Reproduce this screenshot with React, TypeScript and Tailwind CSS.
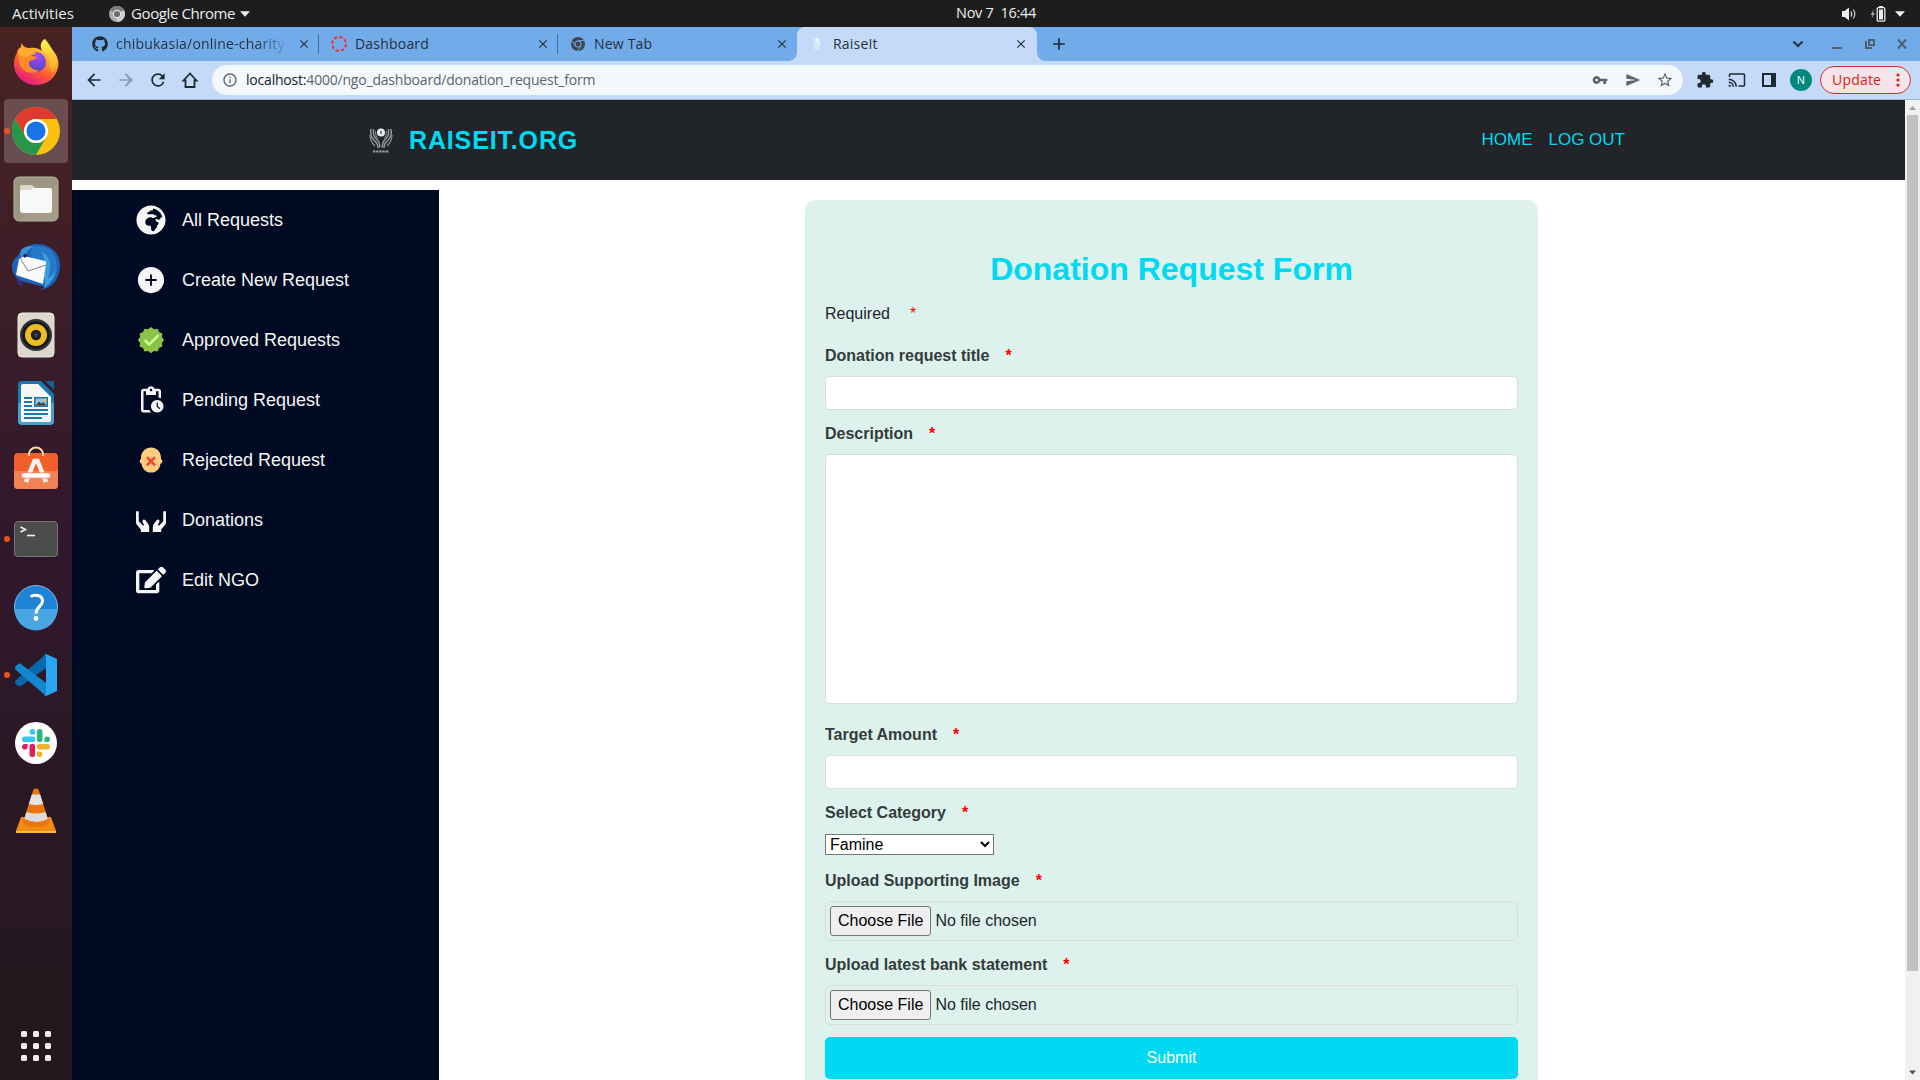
import type { ReactNode } from "react";
import { FaEdit, FaGithub, FaGlobeAfrica } from "react-icons/fa";
import { AiFillPlusCircle } from "react-icons/ai";
import { FcApproval, FcDisapprove } from "react-icons/fc";
import {
  MdPendingActions,
  MdArrowBack,
  MdArrowForward,
  MdRefresh,
  MdInfoOutline,
  MdVpnKey,
  MdSend,
  MdStarBorder,
  MdExtension,
  MdCast,
  MdClose,
  MdAdd,
} from "react-icons/md";

/* ---------- Desktop top bar ---------- */

function TopBar() {
  return (
    <div className="grid h-[27px] grid-cols-[1fr_auto_1fr] items-center bg-[#1d1d1d] font-['Open_Sans',sans-serif] text-[#ececec]">
      <div className="flex items-center">
        <span className="ml-3 w-[97px] text-[15px] leading-none">Activities</span>
        <svg viewBox="0 0 16 16" className="h-4 w-4">
          <circle cx="8" cy="8" r="8" fill="#a9a9a9" />
          <path d="M8 8 L1.1 4 A8 8 0 0 1 15 4 Z" fill="#7c7c7c" />
          <path d="M8 8 L15 4.2 A8 8 0 0 1 8 16 Z" fill="#cfcfcf" />
          <circle cx="8" cy="8" r="4.2" fill="#e8e8e8" />
          <circle cx="8" cy="8" r="3.1" fill="#6e6e6e" />
        </svg>
        <span className="ml-1.5 w-[105px] text-[15px] leading-none tracking-[-0.4px] whitespace-nowrap">Google Chrome</span>
        <svg viewBox="0 0 10 6" className="ml-1 h-1.5 w-2.5">
          <path d="M0 0.3H10L5 5.7Z" fill="#ececec" />
        </svg>
      </div>
      <span className="translate-x-[36px] text-[14.5px] leading-none tracking-[-0.3px] whitespace-pre">Nov 7  16:44</span>
      <div className="flex items-center justify-end pr-[15px]">
        <svg viewBox="0 0 16 16" className="mr-px h-4 w-4" fill="none" stroke="#ececec">
          <path d="M1 5h2.500L8 1.500v13L3.500 11H1Z" fill="#ececec" stroke="none" />
          <path d="M10 5.500q1.600 2.500 0 5" strokeWidth="1.300" />
          <path d="M12.300 3.500q3 4.500 0 9" strokeWidth="1.300" opacity="0.800" />
        </svg>
        <svg viewBox="0 0 16 16" className="ml-3 h-4 w-4">
          <path d="M4 3 0.500 9h2l-1 4 3.500-6H3Z" fill="#a5a5a5" />
          <rect x="9" y="0" width="4" height="2" fill="#ececec" />
          <rect x="7.200" y="1.700" width="7.600" height="13.400" rx="1.200" fill="none" stroke="#ececec" strokeWidth="1.300" />
          <rect x="9" y="3.500" width="4" height="10" fill="#ececec" />
        </svg>
        <svg viewBox="0 0 10 6" className="ml-[9px] h-1.5 w-2.5">
          <path d="M0 0.3H10L5 5.7Z" fill="#ececec" />
        </svg>
      </div>
    </div>
  );
}

/* ---------- Dock icons, each drawn on a 64 × 64 tile ---------- */

function Firefox() {
  return (
    <>
      <defs>
        <linearGradient id="ffBody" x1="0.8" y1="0.05" x2="0.3" y2="1">
          <stop offset="0" stopColor="#ffe94a" />
          <stop offset="0.35" stopColor="#ffa92a" />
          <stop offset="0.65" stopColor="#ff5634" />
          <stop offset="1" stopColor="#e31587" />
        </linearGradient>
        <radialGradient id="ffGlobe" cx="0.6" cy="0.25" r="0.8">
          <stop offset="0" stopColor="#a04bff" />
          <stop offset="1" stopColor="#4a48b8" />
        </radialGradient>
        <linearGradient id="ffTail" x1="0.5" y1="0" x2="0.5" y2="1">
          <stop offset="0" stopColor="#fff44f" />
          <stop offset="1" stopColor="#ff9a2b" />
        </linearGradient>
      </defs>
      <path d="M17 16c0-3 1-4 1-4 0 3 4 5 8 5 4-1 10 1 12 3l3-12c4 4 6 9 9 13 5 6 6 14 2 21-4 8-11 12-20 12C19 54 10 44 10 33c0-5 1-8 3-11 0-3 2-5 4-6Z" fill="url(#ffBody)" />
      <circle cx="32" cy="31" r="10" fill="url(#ffGlobe)" />
      <path d="M38 20c-3-6 0-11 3-12 1 6 7 9 10 15 3 7 1 15-4 20 1-4 0-7-2-8 2-6-1-13-7-15Z" fill="url(#ffTail)" />
      <path d="M14 24c4-4 9-3 12 0 3 2 6 1 7 2-1 3-6 3-8 5-1 4 4 9 10 8-7 6-19 2-20-9Z" fill="#ff8a26" />
      <path d="M17 16c2 1 3 2 4 3 6-2 10 1 11 4-4 0-7 3-11 3-3 0-6-1-7-4 0-3 2-5 3-6Z" fill="#ffab2e" />
    </>
  );
}

function Chrome() {
  return (
    <>
      <circle cx="32" cy="32" r="24" fill="#fcc010" />
      <path d="M11.2 20A24 24 0 0 1 52.8 20H32A12 12 0 0 0 21.6 38Z" fill="#de3b2e" />
      <path d="M11.2 20 21.6 38A12 12 0 0 0 42.4 38L32 56A24 24 0 0 1 11.2 20Z" fill="#27964a" />
      <circle cx="32" cy="32" r="12" fill="#fff" />
      <circle cx="32" cy="32" r="9.6" fill="#1a73e8" />
    </>
  );
}

function Files() {
  return (
    <>
      <rect x="10" y="10" width="44" height="44" rx="5" fill="#9c9581" stroke="#bab49f" />
      <path d="M54 16v33a5 5 0 0 1-5 5H15Z" fill="#aaa48f" opacity="0.6" />
      <path d="M16 20a2 2 0 0 1 2-2h10l4 4h8v8H16Z" fill="#dedacb" />
      <path d="M16 25q0-2 2-2h8l4-2h16q2 0 2 2v20q0 3-3 3H19q-3 0-3-3Z" fill="#f8f8f7" />
    </>
  );
}

function Thunderbird() {
  return (
    <>
      <path d="M22 13c3-3 7-4 10-4 15 0 25 10 24 23-1 13-8 21-20 23l5-3-24-6C11 42 8 38 8 32c0-6 3-9 6-11 1-3 4-6 8-8Z" fill="#1c61bb" />
      <path d="M34 11c14 0 19 10 19 20 0 10-5 17-13 22 2-5 3-9 2-14-2-8-8-12-15-17-1-7 2-10 7-11Z" fill="#2579c8" />
      <path d="M38 17c8 4 10 13 6 26 5-2 7-6 8-10-1 9-5 15-12 20 1-5 1-8 0-12 1-9 1-17-2-24Z" fill="#3b9fdc" />
      <path d="M11 43c5 1 8 5 8 9-3-1-6-5-8-9Z" fill="#3b2a8a" />
      <path d="M15 24 20 21 41 26q2 1 1 3l-3 20L12 40Z" fill="#fafafa" />
      <path d="M16 23 24 36 42 30" fill="none" stroke="#85858c" strokeWidth="1" />
      <circle cx="21" cy="21" r="1.6" fill="#17264f" />
      <path d="M17 15c4-4 9-5 14-3-6 1-8 4-10 9l-4 1c-1-3-1-5 0-7Z" fill="#3b8fd8" />
      <circle cx="21" cy="20.500" r="1.700" fill="#17264f" />
    </>
  );
}

function Rhythmbox() {
  return (
    <>
      <rect x="14" y="10" width="36" height="44" rx="4" fill="#dcd8cd" stroke="#edeae2" />
      <circle cx="32" cy="32" r="16" fill="#33363d" />
      <circle cx="32" cy="32" r="13.8" fill="#17191d" />
      <circle cx="32" cy="32" r="11" fill="#eebd23" />
      <circle cx="32" cy="32" r="5.2" fill="#1f2023" />
      <circle cx="32" cy="32" r="2" fill="#3d4045" />
    </>
  );
}

function Writer() {
  return (
    <>
      <path d="M18 10h19l13 13v27a4 4 0 0 1-4 4H18a4 4 0 0 1-4-4V14a4 4 0 0 1 4-4Z" fill="#1878b0" />
      <path d="M14 32h36v18a4 4 0 0 1-4 4H18a4 4 0 0 1-4-4Z" fill="#47a0d0" />
      <path d="M17 15q0-2 2-2h15l13 13v23q0 2-2 2H19q-2 0-2-2Z" fill="#f7f7f7" />
      <path d="M41 10h9v9Z" fill="#0e6596" />
      <path d="M20 27h8M20 31h8M20 35h8M20 39h24M20 43h24M20 47h18" stroke="#1a78ae" strokeWidth="2" />
      <rect x="30" y="26" width="14" height="10" fill="#1a78ae" />
      <rect x="31.5" y="27.5" width="11" height="7" fill="#8cc6ea" />
      <path d="m31.500 34.500 3.500-4 2.500 2 2-1.500 3 3.500Z" fill="#444" />
      <circle cx="41" cy="29" r="1.5" fill="#f2c230" />
    </>
  );
}

function Software() {
  return (
    <>
      <rect x="10" y="14" width="44" height="36" rx="4" fill="#f1602a" />
      <path d="M10 32h44v14a4 4 0 0 1-4 4H14a4 4 0 0 1-4-4Z" fill="#f38254" />
      <path d="M25 17v-2a7 6.500 0 0 1 14 0v2" fill="none" stroke="#f8dcb4" strokeWidth="2" />
      <path d="M22 43 30.500 22h3L42 43" fill="none" stroke="#fdf3ee" strokeWidth="4.500" />
      <path d="M20 36.500h24" stroke="#f38254" strokeWidth="6" />
      <path d="M20 36.500h24" stroke="#fff" strokeWidth="4.500" strokeLinecap="round" />
    </>
  );
}

function TerminalIcon() {
  return (
    <>
      <rect x="10.500" y="14.500" width="43" height="35" rx="3.500" fill="#4c4c4c" stroke="#767676" />
      <path d="m16.500 20 5 2.500-5 2.500" fill="none" stroke="#f2f2f2" strokeWidth="1.600" />
      <path d="M23 28.500h8" stroke="#f2f2f2" strokeWidth="1.600" />
    </>
  );
}

function Help() {
  return (
    <>
      <circle cx="32" cy="32" r="21.500" fill="#1f83d6" stroke="#79b8ec" />
      <path d="M10.500 34h43a21.500 21.500 0 0 1-43 0Z" fill="#48a6e5" />
      <path d="M26.500 21.500c4-2.500 12-1.500 12 4.500 0 5-6.500 6-6.500 12.500" fill="none" stroke="#fff" strokeWidth="3" />
      <circle cx="32" cy="43.500" r="2.400" fill="#fff" />
    </>
  );
}

function VsCode() {
  return (
    <>
      <path d="M42 11v14L17 43c-2 1-3 0-4-1-3-2-2-4-1-5Z" fill="#0768ab" />
      <path d="M42 53V40L17 21c-2-1-3 0-4 1-3 2-2 4-1 5Z" fill="#1287d1" />
      <path d="M42 11 53 16v32l-11 5q-1 0-2-1c2 1 2 0 2-2V14q0-3-2-2Z" fill="#29a7f3" />
    </>
  );
}

function Slack() {
  return (
    <>
      <circle cx="32" cy="32" r="21" fill="#fff" />
      <g strokeWidth="5.600" strokeLinecap="round">
        <path d="M20.800 28.300h7.700" stroke="#36c5f0" />
        <path d="M35.700 20.800v7.700" stroke="#2eb67d" />
        <path d="M35.500 35.700h7.700" stroke="#ecb22e" />
        <path d="M28.300 35.500v7.700" stroke="#e01e5a" />
      </g>
      <path d="M28.300 18a2.800 2.800 0 1 0 0 5.600h2.800v-2.800a2.800 2.800 0 0 0-2.800-2.800Z" fill="#36c5f0" />
      <path d="M46 28.300a2.800 2.800 0 1 0-5.600 0v2.800h2.800a2.800 2.800 0 0 0 2.800-2.800Z" fill="#2eb67d" />
      <path d="M35.700 46a2.800 2.800 0 1 0 0-5.600h-2.800v2.800a2.800 2.800 0 0 0 2.800 2.800Z" fill="#ecb22e" />
      <path d="M18 35.700a2.800 2.800 0 1 0 5.600 0v-2.800h-2.800a2.800 2.800 0 0 0-2.800 2.800Z" fill="#e01e5a" />
    </>
  );
}

function Vlc() {
  return (
    <>
      <path d="M17 38h30l5 14v2H12v-2Z" fill="#f38b10" />
      <path d="M12 52h40v1.800H12Z" fill="#ffc14a" />
      <path d="M29.500 10.500q2.500-2 5 0L45 43q-1 5-13 5t-13-5Z" fill="#e9750c" />
      <path d="M27.800 15.500h8.400l3 9.500q-7 2-14.400 0Z" fill="#e4e4e4" />
      <path d="M22.500 33q9.500 3 19 0l2.200 7q-10 6-23.400 0Z" fill="#dcdcdc" />
    </>
  );
}

const dockItems: { name: string; art: ReactNode; running?: boolean; active?: boolean }[] = [
  { name: "firefox", art: <Firefox /> },
  { name: "chrome", art: <Chrome />, running: true, active: true },
  { name: "files", art: <Files /> },
  { name: "mail", art: <Thunderbird /> },
  { name: "music", art: <Rhythmbox /> },
  { name: "writer", art: <Writer /> },
  { name: "software", art: <Software /> },
  { name: "terminal", art: <TerminalIcon />, running: true },
  { name: "help", art: <Help /> },
  { name: "code", art: <VsCode />, running: true },
  { name: "slack", art: <Slack /> },
  { name: "vlc", art: <Vlc /> },
];

function Dock() {
  return (
    <div className="flex w-[72px] shrink-0 flex-col items-center bg-linear-to-b from-[#492322] via-[#30182c] to-[#23181c] pt-1">
      <div className="flex flex-col gap-1">
        {dockItems.map((d) => (
          <div key={d.name} className={d.active ? "relative h-16 w-16 rounded bg-white/20" : "relative h-16 w-16"}>
            <svg viewBox="0 0 64 64" className="h-16 w-16">
              {d.art}
            </svg>
            {d.running && <span className="absolute top-[29px] left-0 h-1.5 w-1.5 rounded-full bg-[#e95420]" />}
          </div>
        ))}
      </div>
      <div className="mt-auto mb-[19px] grid grid-cols-3 gap-1.5">
        {Array.from({ length: 9 }, (_, i) => (
          <span key={i} className="h-1.5 w-1.5 rounded-[1.5px] bg-[#f0eeee]" />
        ))}
      </div>
    </div>
  );
}

/* ---------- Browser chrome ---------- */

function RaiseItLogo({ className }: { className: string }) {
  return (
    <svg viewBox="0 0 24 26" className={className}>
      <g fill="none" stroke="#8f9a9c" strokeWidth="1.500">
        <path d="M2 2c-1 6 0 9 4 12 2 2 3 4 3 7" />
        <path d="M4.500 2C4 8 5 10 8 12.500c2 2 2.700 4 2.700 8" />
        <path d="M22 2c1 6 0 9-4 12-2 2-3 4-3 7" />
        <path d="M19.500 2C20 8 19 10 16 12.500c-2 2-2.700 4-2.700 8" />
        <path d="M1 8c0 4 1 7 5 11M23 8c0 4-1 7-5 11" strokeWidth="1.200" />
        <path d="M6.500 4c0 4 1 6 2.500 7.500M17.500 4c0 4-1 6-2.500 7.500" strokeWidth="1" />
      </g>
      <circle cx="12" cy="5.500" r="4" fill="#e6ecec" />
      <ellipse cx="12" cy="5.500" rx="1" ry="1.700" fill="#6a7375" />
      <path d="M4 24.500h16" stroke="#98a2a4" strokeWidth="2.200" strokeDasharray="2.400 0.700" />
    </svg>
  );
}

const tabs: { title: string; icon: ReactNode; active?: boolean; divider?: boolean; fade?: boolean }[] = [
  { title: "chibukasia/online-charity-", icon: <FaGithub className="h-4 w-4 text-[#24292f]" />, divider: true, fade: true },
  {
    title: "Dashboard",
    icon: (
      <svg viewBox="0 0 16 16" className="h-4 w-4">
        <circle cx="8" cy="8" r="6.900" fill="none" stroke="#f0342a" strokeWidth="2" strokeDasharray="3.400 2.020" />
      </svg>
    ),
    divider: true,
  },
  {
    title: "New Tab",
    icon: (
      <svg viewBox="0 0 16 16" className="h-4 w-4">
        <circle cx="8" cy="8" r="7" fill="#3d4650" />
        <g stroke="#71aaea" strokeWidth="0.900">
          <path d="M8 4.500h6.500M5 9.800 1.800 4.400M11 9.800 7.700 15" />
        </g>
        <circle cx="8" cy="8" r="3.500" fill="#71aaea" />
        <circle cx="8" cy="8" r="2.500" fill="#3d4650" />
      </svg>
    ),
  },
  {
    title: "RaiseIt",
    icon: (
      <svg viewBox="0 0 16 16" className="h-4 w-4">
        <path d="M4.500 2v6q0 3 3.500 4 3.500-1 3.500-4V2L9.500 5h-3Z" fill="#d9ebf8" />
        <circle cx="8" cy="3.500" r="1.600" fill="#f6fbff" />
        <path d="M5 13h6" stroke="#dfeffa" />
      </svg>
    ),
    active: true,
  },
];

function TabStrip() {
  return (
    <div className="flex h-[34px] items-center bg-[#71abea] pl-2 text-[#26303a]">
      {tabs.map((t) => (
        <div
          key={t.title}
          className={
            t.active
              ? "relative flex h-full w-[240px] items-center rounded-t-lg bg-[#c5daf8] pl-3"
              : "relative flex h-full w-[239px] items-center pl-3"
          }
        >
          {t.icon}
          <span
            className={
              t.fade
                ? "ml-2 w-[174px] overflow-hidden bg-linear-to-r from-[#26303a] from-80% to-[#71abea] bg-clip-text text-sm tracking-[0.2px] whitespace-nowrap text-transparent"
                : "ml-2 w-[174px] text-sm tracking-[0.2px] whitespace-nowrap"
            }
          >
            {t.title}
          </span>
          <MdClose className="ml-[7px] h-3.5 w-3.5" />
          {t.divider && <span className="absolute top-[7px] right-0 h-5 w-px bg-[#46699a]" />}
          {t.active && (
            <>
              <span className="absolute bottom-0 -left-2 h-2 w-2 bg-[radial-gradient(circle_at_0_0,#71abea_7.5px,#c5daf8_8px)]" />
              <span className="absolute -right-2 bottom-0 h-2 w-2 bg-[radial-gradient(circle_at_100%_0,#71abea_7.5px,#c5daf8_8px)]" />
            </>
          )}
        </div>
      ))}
      <MdAdd className="ml-3 h-5 w-5 text-[#202a33]" />
      <div className="ml-auto flex items-center pr-2.5 text-[#51606f]">
        <svg viewBox="0 0 12 12" className="mr-[27px] h-3 w-3">
          <path d="m1.500 3.500 4.500 4.500 4.500-4.500" fill="none" stroke="#26323d" strokeWidth="2" />
        </svg>
        <svg viewBox="0 0 12 12" className="mr-[21px] h-3 w-3">
          <path d="M1 10h10" stroke="currentColor" strokeWidth="2" />
        </svg>
        <svg viewBox="0 0 12 12" className="mr-5 h-3 w-3" fill="none" stroke="currentColor">
          <path d="M5 2h5v5H5Z" strokeWidth="2" />
          <path d="M2 3v7h6" strokeWidth="2" />
        </svg>
        <svg viewBox="0 0 12 12" className="mr-0.5 h-3 w-3">
          <path d="m2 1.500 8 9m0-9-8 9" stroke="currentColor" strokeWidth="2" />
        </svg>
      </div>
    </div>
  );
}

function Toolbar() {
  return (
    <div className="flex h-[39px] items-center border-b border-[#9db4cc] bg-[#c5daf8] pl-3 text-[#202a33]">
      <div className="flex items-center gap-3">
        <MdArrowBack className="h-5 w-5" />
        <MdArrowForward className="h-5 w-5 text-[#8595aa]" />
        <MdRefresh className="h-5 w-5" />
        <svg viewBox="0 0 20 20" className="h-5 w-5">
          <path d="M3.500 10.500 10 3.500l6.500 7h-2V17h-9v-6.500Z" fill="none" stroke="currentColor" strokeWidth="1.800" />
        </svg>
      </div>
      <div className="ml-3 flex h-[30px] w-[1471px] items-center rounded-full bg-[#f3f8fd] pl-2.5 text-[#5f6368]">
        <MdInfoOutline className="h-4 w-4" />
        <span className="ml-2 text-sm tracking-[-0.2px]">
          <span className="text-[#202124]">localhost:</span>4000/ngo_dashboard/donation_request_form
        </span>
        <div className="ml-auto flex items-center gap-4 pr-[9px]">
          <MdVpnKey className="h-4 w-4" />
          <MdSend className="h-4 w-4 translate-x-px" />
          <MdStarBorder className="h-[18px] w-[18px]" />
        </div>
      </div>
      <MdExtension className="ml-[13px] h-[18px] w-[18px]" />
      <MdCast className="ml-3.5 h-[18px] w-[18px]" />
      <svg viewBox="0 0 14 14" className="ml-4 h-3.5 w-3.5">
        <path d="M1 1h12v12H1Z" fill="none" stroke="currentColor" strokeWidth="2" />
        <path d="M9 1h4v12H9Z" fill="currentColor" />
      </svg>
      <span className="ml-3.5 flex h-[22px] w-[22px] items-center justify-center rounded-full bg-[#00897b] text-[11px] text-white">N</span>
      <div className="ml-2 flex h-7 w-[91px] items-center rounded-full border border-[#d93025] bg-[#f3e5ea] pl-[11px] text-[#d91e18]">
        <span className="w-[64px] text-sm tracking-[0.2px]">Update</span>
        <svg viewBox="0 0 4 14" className="h-3.5 w-1" fill="currentColor">
          <circle cx="2" cy="2" r="1.600" />
          <circle cx="2" cy="7" r="1.600" />
          <circle cx="2" cy="12" r="1.600" />
        </svg>
      </div>
    </div>
  );
}

/* ---------- Web page ---------- */

function SiteHeader() {
  return (
    <header className="flex h-20 items-center justify-between bg-[#212529] pr-[280px] pl-[297px] text-[#00d9f2]">
      <div className="flex items-center">
        <RaiseItLogo className="h-[26px] w-6" />
        <span className="ml-4 text-[25px] leading-8 font-bold tracking-[0.85px]">RAISEIT.ORG</span>
      </div>
      <nav className="flex gap-4 text-[17px]">
        <a>HOME</a>
        <a>LOG OUT</a>
      </nav>
    </header>
  );
}

function CuppedHands() {
  const hand =
    "M0 7.200Q0 6 1.300 6t1.500 1.200v9l3.700 4.100q.6.500 1.200-.1.500-.5 0-1.200l-1-1.800q-.7-1.700.4-2.500 1.100-.6 2.100.4l3 4q1 1.300 1 3V27H4.800v-2.600l-3.900-4.600Q0 18.700 0 17.500Z";
  return (
    <svg viewBox="0 0 30 30" width={30} height={30} fill="currentColor">
      <path d={hand} />
      <path d={hand} transform="matrix(-1 0 0 1 30 0)" />
    </svg>
  );
}

const menu = [
  { label: "All Requests", icon: <FaGlobeAfrica size={30} /> },
  { label: "Create New Request", icon: <AiFillPlusCircle size={30} /> },
  { label: "Approved Requests", icon: <FcApproval size={30} /> },
  { label: "Pending Request", icon: <MdPendingActions size={30} /> },
  { label: "Rejected Request", icon: <FcDisapprove size={30} /> },
  { label: "Donations", icon: <CuppedHands /> },
  { label: "Edit NGO", icon: <FaEdit size={30} /> },
];

function Sidebar() {
  return (
    <aside className="w-[367px] shrink-0 bg-[#000a23] pl-16 text-[#f5f5f5]">
      {menu.map((m) => (
        <div key={m.label} className="flex h-[60px] items-center gap-4 text-lg">
          {m.icon}
          <span className="pb-px">{m.label}</span>
        </div>
      ))}
    </aside>
  );
}

function Label({ children, className = "" }: { children: ReactNode; className?: string }) {
  return (
    <div className={`flex h-6 gap-4 leading-6 font-bold text-[#333b3c] ${className}`}>
      <span>{children}</span>
      <span className="text-[#ff0000]">*</span>
    </div>
  );
}

function FileField() {
  return (
    <input
      type="file"
      className="mt-2 block h-10 w-full rounded-[5px] border border-[#dcdcdc] p-1 text-base leading-[28px] text-[#212529] file:mr-1 file:h-[30px] file:rounded-[3px] file:border file:border-solid file:border-[#767676] file:bg-[#efefef] file:px-[7px] file:pb-0.5 file:text-black"
    />
  );
}

function DonationForm() {
  return (
    <form className="mt-2.5 ml-[366px] h-[1000px] w-[733px] rounded-[10px] bg-[#def2ed] px-5 pt-[50px] text-base text-[#212529]">
      <h1 className="h-[38px] text-center text-[32px] leading-[38px] font-bold text-[#00d9f2]">Donation Request Form</h1>
      <div className="mt-3.5 flex h-6 gap-5 leading-6">
        <span>Required</span>
        <span className="text-[#ff0000]">*</span>
      </div>
      <Label className="mt-[18px]">Donation request title</Label>
      <input className="mt-2 block h-[34px] w-full rounded-[5px] border border-[#dcdcdc] bg-white" />
      <Label className="mt-3">Description</Label>
      <textarea className="mt-2 block h-[250px] w-full resize-none rounded-[5px] border border-[#dcdcdc] bg-white" />
      <Label className="mt-[19px]">Target Amount</Label>
      <input className="mt-2 block h-[34px] w-full rounded-[5px] border border-[#dcdcdc] bg-white" />
      <Label className="mt-3">Select Category</Label>
      <select className="mt-[9px] block h-[21px] w-[169px] border border-[#767676] bg-white text-base leading-none text-black">
        <option>Famine</option>
      </select>
      <Label className="mt-3.5">Upload Supporting Image</Label>
      <FileField />
      <Label className="mt-3">Upload latest bank statement</Label>
      <FileField />
      <button type="button" className="mt-3 block h-[42px] w-full rounded-[5px] bg-[#00d9f2] text-white">
        Submit
      </button>
    </form>
  );
}

function Scrollbar() {
  return (
    <div className="flex w-[15px] shrink-0 flex-col items-center bg-[#f1f1f1]">
      <svg viewBox="0 0 15 15" className="h-[15px] w-[15px]">
        <path d="M4 10h7L7.500 6Z" fill="#a3a3a3" />
      </svg>
      <div className="h-[856px] w-[11px] bg-[#c1c1c1]" />
      <svg viewBox="0 0 15 15" className="mt-auto h-[15px] w-[15px]">
        <path d="M4 5.500h7l-3.500 4Z" fill="#505050" />
      </svg>
    </div>
  );
}

export default function App() {
  return (
    <div className="flex h-[1080px] w-[1920px] flex-col overflow-hidden bg-white">
      <TopBar />
      <div className="flex min-h-0 flex-1">
        <Dock />
        <div className="flex min-w-0 flex-1 flex-col">
          <div className="font-['Open_Sans',sans-serif]">
            <TabStrip />
            <Toolbar />
          </div>
          <div className="flex min-h-0 flex-1 font-['Liberation_Sans',Arial,sans-serif]">
            <div className="flex min-w-0 flex-1 flex-col overflow-hidden">
              <SiteHeader />
              <main className="mt-2.5 flex min-h-0 flex-1">
                <Sidebar />
                <div className="flex-1 overflow-hidden">
                  <DonationForm />
                </div>
              </main>
            </div>
            <Scrollbar />
          </div>
        </div>
      </div>
    </div>
  );
}
